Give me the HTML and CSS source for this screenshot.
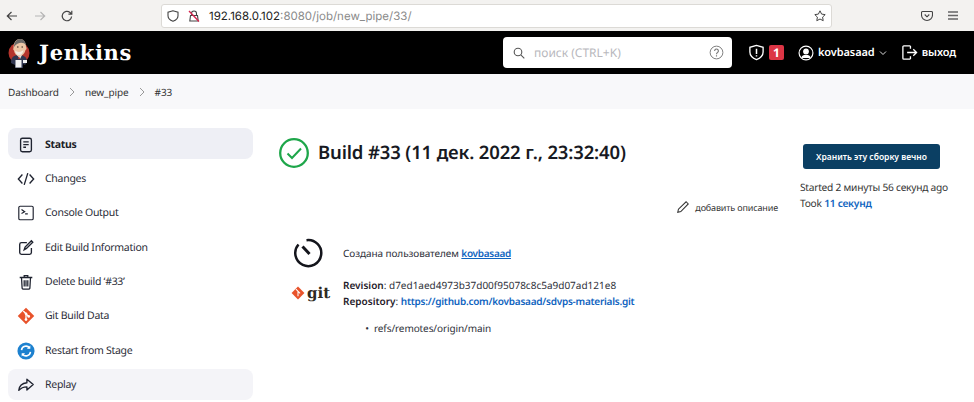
FILE: index.html
```html
<!DOCTYPE html>
<html lang="ru">
<head>
<meta charset="utf-8">
<title>Jenkins</title>
<link rel="stylesheet" href="styles.css">
</head>
<body>
<div class="chrome">
  <div class="nav-btns">
    <svg class="nav-ico" viewBox="0 0 12 12" fill="none" stroke="#444" stroke-width="1.200"><path d="M11 6H1.500M5.500 2 1.300 6l4.200 4"/></svg>
    <svg class="nav-ico" viewBox="0 0 12 12" fill="none" stroke="#b5b5b5" stroke-width="1.200"><path d="M1 6h9.500M6.500 2l4.200 4-4.200 4"/></svg>
    <svg class="nav-ico" viewBox="0 0 12 12" fill="none" stroke="#444" stroke-width="1.200"><path d="M10.600 6.500A4.700 4.700 0 1 1 9 2.500l1.600 1.500M10.800.8v3.400H7.400"/></svg>
  </div>
  <div class="urlbar">
    <svg class="url-ico" viewBox="0 0 12 12" fill="none" stroke="#444" stroke-width="1.100"><path d="M6 .8 1 2.200v3.500c0 2.900 2.400 4.600 5 5.500 2.600-.9 5-2.600 5-5.500V2.200z"/></svg>
    <svg class="url-ico" viewBox="0 0 12 12" fill="none"><path d="M3.500 5.500V3.500a2.500 2.500 0 0 1 5 0v2M1.800 11l.7-5.500h7l.7 5.500z" stroke="#444" stroke-width="1.100"/><path d="M1 1l10 10.500" stroke="#d7264f" stroke-width="1.300"/></svg>
    <div class="url"><span class="url-host">192.168.0.102</span>:8080/job/new_pipe/33/</div>
    <svg class="url-ico" viewBox="0 0 12 12" fill="none" stroke="#444" stroke-width="1"><path d="m6 .8 1.600 3.300 3.600.5-2.600 2.500.6 3.600L6 9l-3.200 1.700.6-3.600L.8 4.600l3.600-.5z"/></svg>
  </div>
  <div class="tools">
    <svg class="url-ico" viewBox="0 0 12 12" fill="none" stroke="#444" stroke-width="1.100"><path d="M1.500 1.500h9a1 1 0 0 1 1 1V5a5.500 5.500 0 0 1-11 0V2.500a1 1 0 0 1 1-1z"/><path d="M3.700 4.500 6 6.800l2.300-2.300"/></svg>
    <svg class="menu-ico" viewBox="0 0 10 9" fill="none" stroke="#666" stroke-width="1.300"><path d="M0 1h10M0 4.500h10M0 8h10"/></svg>
  </div>
</div>

<header class="topbar">
  <div class="brand">
    <svg class="logo" viewBox="0 0 22 30">
      <circle cx="11" cy="15" r="10.500" fill="#b5342c"/>
      <path d="M3 25c0-6 3-8 8-8s8 2 8 7l-2 3-2-1v4H7v-3z" fill="#30364f"/>
      <path d="M9 17l3 4 2-4z" fill="#e8e4de"/>
      <path d="M11 18l-1 3h2z" fill="#b5342c"/>
      <path d="M5.500 10C5.500 4 8.500 1 12 1s6 3 6 8c.8.5.8 2.500-.5 3-.5 3-3 6-6.500 6-2.500 0-4.500-2.500-5-5.500-.8-.3-1-1.500-.5-2.500z" fill="#ecc6a6"/>
      <path d="M6 9C6 4 9 1 12 1s5.500 2 5.800 6c-2-3-8-3.500-11.800 2z" fill="#6d6a68"/>
      <path d="M7 12.500c2 2 6 2 8.500-.5-.5 3-2 5-4.500 5s-3.500-2-4-4.500z" fill="#f4ece2"/>
      <path d="M9 9h1.500M13.500 9H15" stroke="#33261e" stroke-width="1"/>
      <rect x="7.500" y="22" width="6" height="7.500" fill="#f1f1f1"/>
      <rect x="15" y="22" width="4" height="3" fill="#f1f1f1"/>
    </svg>
    <span class="brand-name">Jenkins</span>
  </div>
  <div class="search">
    <svg class="ico12" viewBox="0 0 12 12" fill="none" stroke="#555" stroke-width="1.100"><circle cx="5" cy="5" r="3.800"/><path d="m7.800 7.800 3.500 3.500"/></svg>
    <span class="search-text">поиск (CTRL+K)</span>
    <svg class="help" viewBox="0 0 16 16" fill="none" stroke="#777" stroke-width="1"><circle cx="8" cy="8" r="6.800"/><path d="M6 6.300a2 2 0 1 1 3.200 1.600C8.400 8.500 8 8.900 8 9.800M8 11v1.200" stroke-width="1.200"/></svg>
  </div>
  <div class="top-actions">
    <div class="alert">
      <svg class="ico17" viewBox="0 0 18 18" fill="none" stroke="#fff" stroke-width="1.400"><path d="M9 1.500 2 3.500v5C2 12.500 5.500 15.200 9 16.500c3.500-1.300 7-4 7-8v-5z"/><path d="M9 5v5.500M9 11.800v1.400" stroke-width="1.600"/></svg>
      <span class="badge">1</span>
    </div>
    <div class="user">
      <svg class="ico16" viewBox="0 0 18 18" fill="none" stroke="#fff" stroke-width="1.300"><circle cx="9" cy="9" r="7.800"/><circle cx="9" cy="7.200" r="2.600" fill="#fff"/><path d="M4.300 14.500c1-3.800 8.400-3.800 9.400 0" fill="#fff"/></svg>
      <span>kovbasaad</span>
      <svg class="chev" viewBox="0 0 8 8" fill="none" stroke="#ddd" stroke-width="1"><path d="M1 2.500 4 5.500l3-3"/></svg>
    </div>
    <div class="logout">
      <svg class="ico17" viewBox="0 0 18 18" fill="none" stroke="#fff" stroke-width="1.400"><path d="M10 2H3a1 1 0 0 0-1 1v12a1 1 0 0 0 1 1h7M6.500 9h10M13 5.500 16.500 9 13 12.500M10 2v3M10 13v3"/></svg>
      <span>выход</span>
    </div>
  </div>
</header>

<nav class="crumbs">
  <span>Dashboard</span>
  <svg class="sep" viewBox="0 0 8 12" fill="none" stroke="#999" stroke-width="1"><path d="m2 2 4 4-4 4"/></svg>
  <span>new_pipe</span>
  <svg class="sep" viewBox="0 0 8 12" fill="none" stroke="#999" stroke-width="1"><path d="m2 2 4 4-4 4"/></svg>
  <span>#33</span>
</nav>

<div class="page">
  <aside class="side">
    <a class="item active">
      <svg class="side-ico" viewBox="0 0 20 20" fill="none" stroke="#1f2330" stroke-width="1.500"><rect x="4" y="2.500" width="12" height="15" rx="2"/><path d="M7 6.500h6M7 9.500h6M7 12.500h3"/></svg>
      <span>Status</span>
    </a>
    <a class="item">
      <svg class="side-ico" viewBox="0 0 20 20" fill="none" stroke="#1f2330" stroke-width="1.500"><path d="M6 5 1.500 10 6 15M14 5l4.500 5-4.500 5M12 3.500 8 16.500"/></svg>
      <span>Changes</span>
    </a>
    <a class="item">
      <svg class="side-ico" viewBox="0 0 20 20" fill="none" stroke="#1f2330" stroke-width="1.300"><rect x="2" y="2.500" width="16" height="15" rx="1.500"/><path d="m5 6 3.500 2.500L5 10.500M9 11h3"/></svg>
      <span>Console Output</span>
    </a>
    <a class="item">
      <svg class="side-ico" viewBox="0 0 20 20" fill="none" stroke="#1f2330" stroke-width="1.500"><path d="M11 4H5a2 2 0 0 0-2 2v9a2 2 0 0 0 2 2h9a2 2 0 0 0 2-2v-5M8 12l1-3 7-7 1.500 1.500-7 7z"/></svg>
      <span>Edit Build Information</span>
    </a>
    <a class="item">
      <svg class="side-ico" viewBox="0 0 20 20" fill="none" stroke="#1f2330" stroke-width="1.400"><path d="M3 5h14M8 5V3h4v2M5 5l.7 12a1.500 1.500 0 0 0 1.500 1h5.600a1.500 1.500 0 0 0 1.500-1L15 5M8 8v7M10 8v7M12 8v7"/></svg>
      <span>Delete build ‘#33’</span>
    </a>
    <a class="item">
      <svg class="side-ico" viewBox="0 0 20 20"><path d="M10 .800 19.200 10 10 19.200.800 10z" fill="#e8532b"/><path d="M7 4.500 13 10.500M10 7.500v7" stroke="#fff" stroke-width="1.400"/><circle cx="10" cy="7.500" r="1.500" fill="#fff"/><circle cx="10" cy="14" r="1.500" fill="#fff"/><circle cx="13" cy="10.500" r="1.500" fill="#fff"/></svg>
      <span>Git Build Data</span>
    </a>
    <a class="item">
      <svg class="side-ico" viewBox="0 0 20 20" fill="none"><circle cx="10" cy="10" r="9.500" fill="#1d81cf"/><path d="M5 9a5 5 0 0 1 9-2.300M15 11a5 5 0 0 1-9 2.300" stroke="#fff" stroke-width="1.700"/><path d="M14.800 3.800v3.800h-3.800zM5.200 16.200v-3.800H9z" fill="#fff"/></svg>
      <span>Restart from Stage</span>
    </a>
    <a class="item hover">
      <svg class="side-ico" viewBox="0 0 20 20" fill="none" stroke="#1f2330" stroke-width="1.500" stroke-linejoin="round"><path d="M11 3.500 18 9.500l-7 6v-3.500c-4 0-6.500 1-9 4 .5-5 3.500-8 9-8.500z"/></svg>
      <span>Replay</span>
    </a>
  </aside>

  <main class="main">
    <div class="head">
      <div class="head-left">
        <h1 class="title">
          <svg class="ok" viewBox="0 0 30 30" fill="none" stroke="#1ea64a"><circle cx="15" cy="15" r="13.800" stroke-width="2.300"/><path d="m8.500 15.500 4.500 4.500 9-9.500" stroke-width="2"/></svg>
          <span>Build #33 (11 дек. 2022 г., 23:32:40)</span>
        </h1>
        <div class="add-desc">
          <svg class="ico14" viewBox="0 0 16 16" fill="none" stroke="#333" stroke-width="1.200"><path d="M2 14l.8-3.500L11.500 2 14 4.500 5.500 13.200z"/></svg>
          <span>добавить описание</span>
        </div>
      </div>
      <div class="head-right">
        <button class="keep">Хранить эту сборку вечно</button>
        <div class="times">
          <div>Started 2 минуты 56 секунд ago</div>
          <div>Took <a class="link-b">11 секунд</a></div>
        </div>
      </div>
    </div>

    <div class="row row-user">
      <svg class="timer" viewBox="0 0 32 32" fill="none" stroke="#14151c" stroke-width="2.500"><path d="M13.500 3.200A13 13 0 1 1 5.500 7.500"/><path d="M9.500 9.500 16.500 17" stroke-width="3"/></svg>
      <div>Создана пользователем <a class="link-u">kovbasaad</a></div>
    </div>

    <div class="row row-git">
      <div class="git-logo">
        <svg class="git-mark" viewBox="0 0 20 20"><path d="M10 .800 19.200 10 10 19.200.800 10z" fill="#e8532b"/><path d="M7 4.500 13 10.500M10 7.500v7" stroke="#fff" stroke-width="1.500"/></svg>
        <span class="git-word">git</span>
      </div>
      <div class="git-info">
        <div><b>Revision</b>: d7ed1aed4973b37d00f95078c8c5a9d07ad121e8</div>
        <div><b>Repository</b>: <a class="link-b">https://github.com/kovbasaad/sdvps-materials.git</a></div>
      </div>
    </div>

    <ul class="refs"><li>refs/remotes/origin/main</li></ul>
  </main>
</div>
</body>
</html>
```

FILE: styles.css
```css
* { box-sizing: border-box; }
html, body { margin: 0; padding: 0; }
body {
  width: 974px;
  height: 402px;
  overflow: hidden;
  background: #fff;
  color: #23252f;
  font-family: "Noto Sans", "Liberation Sans", sans-serif;
  font-size: 11px;
  text-rendering: geometricPrecision;
}
svg { display: block; flex: none; }
.ico12 { width: 12px; height: 12px; }
.ico14 { width: 14px; height: 14px; }
.ico16 { width: 16px; height: 16px; }
.ico17 { width: 17px; height: 17px; }
.nav-ico { width: 12px; height: 12px; }
.url-ico { width: 12px; height: 12px; }
.menu-ico { width: 10px; height: 9px; }

.chrome {
  height: 31px;
  background: #f3f2f0;
  display: flex;
  align-items: center;
}
.nav-btns { width: 161px; padding-left: 6px; display: flex; gap: 15.500px; align-items: center; }
.urlbar {
  width: 671px;
  height: 24px;
  background: #fff;
  border: 1px solid #dcdad6;
  border-radius: 3px;
  display: flex;
  align-items: center;
  padding: 0 5px 0 5px;
  gap: 9px;
}
.url {
  flex: 1;
  font-size: 11.500px;
  color: #8a8a8a;
  font-family: "Inter", "Noto Sans", sans-serif;
}
.url-host { color: #222; }
.tools { flex: 1; display: flex; justify-content: flex-end; align-items: center; gap: 15px; padding-right: 16px; }

.topbar {
  height: 43px;
  background: #000;
  color: #fff;
  display: flex;
  align-items: center;
}
.brand { width: 503px; padding-left: 8px; display: flex; align-items: center; gap: 9px; }
.logo { width: 22px; height: 30px; }
.brand-name {
  font-family: "DejaVu Serif", "Liberation Serif", serif;
  font-weight: 700;
  font-size: 21px;
  letter-spacing: .7px;
}
.search {
  width: 229px;
  height: 31px;
  background: #fff;
  border-radius: 4px;
  display: flex;
  align-items: center;
  padding: 0 8px 0 10px;
}
.search-text { flex: 1; padding-left: 9px; color: #b8b8bd; font-size: 12px; }
.help { width: 15px; height: 15px; }
.top-actions { flex: 1; display: flex; align-items: center; font-weight: 600; font-size: 11px; padding-left: 16px; }
.alert { display: flex; align-items: center; gap: 4px; }
.badge {
  width: 15px;
  height: 15px;
  background: #dc3545;
  border-radius: 2px;
  text-align: center;
  line-height: 15px;
  font-size: 12px;
  font-weight: 700;
}
.user { display: flex; align-items: center; gap: 4px; margin-left: 14px; letter-spacing: -.1px; }
.chev { width: 8px; height: 8px; }
.logout { display: flex; align-items: center; gap: 4px; margin-left: 14px; font-size: 11px; letter-spacing: -.1px; }

.crumbs {
  height: 35px;
  background: #f8f8fa;
  display: flex;
  align-items: center;
  padding-left: 8px;
  font-size: 10px;
  letter-spacing: -.1px;
  color: #333;
}
.sep { width: 8px; height: 12px; margin: 0 9px; }

.page { display: flex; }
.side {
  flex: none;
  width: 279px;
  padding: 19px 0 0 8px;
  display: flex;
  flex-direction: column;
  gap: 3.400px;
}
.item {
  width: 245px;
  height: 31px;
  border-radius: 8px;
  display: flex;
  align-items: center;
  padding: 2px 0 0 9px;
  gap: 10px;
  font-size: 10.500px;
  letter-spacing: -.28px;
  color: #2b2d38;
}
.item.active { background: #eeeff5; font-weight: 700; color: #1c1e28; }
.item.hover { background: #f4f4f8; }
.side-ico { width: 18px; height: 18px; }

.main { flex: 1; min-width: 0; padding-top: 29px; }
.head { display: flex; }
.head-left { flex: none; width: 521px; }
.title {
  margin: 0;
  display: flex;
  align-items: center;
  gap: 9px;
  font-size: 18.500px;
  font-weight: 600;
  letter-spacing: -.15px;
  line-height: 30px;
  color: #171922;
}
.ok { width: 30px; height: 30px; }
.add-desc {
  display: flex;
  justify-content: flex-end;
  align-items: center;
  gap: 5px;
  margin-top: 32px;
  padding-right: 22px;
  font-size: 9px;
  letter-spacing: -.15px;
  color: #333;
}
.head-right { flex: 1; padding-top: 6px; white-space: nowrap; }
.keep {
  display: block;
  margin-left: 3px;
  width: 137px;
  height: 25px;
  border: 0;
  border-radius: 3px;
  background: #0b3f63;
  color: #fff;
  font-family: inherit;
  font-size: 8.500px;
  font-weight: 600;
  padding: 0;
}
.times { margin-top: 10px; font-size: 10.200px; letter-spacing: -.25px; line-height: 16px; color: #333; }
.link-b { color: #0f64c0; font-weight: 600; }
.link-u { color: #0f64c0; font-weight: 600; text-decoration: underline; letter-spacing: -.3px; }

.row { display: flex; align-items: center; font-size: 10px; color: #2e3039; }
.row-user { margin-top: 23px; padding-left: 14px; gap: 18px; letter-spacing: -.08px; }
.timer { width: 32px; height: 32px; }
.row-git { margin-top: 8px; padding-left: 12px; line-height: 16px; }
.git-logo { width: 52px; display: flex; align-items: center; gap: 2px; }
.git-mark { width: 14px; height: 14px; }
.git-word { font-family: "DejaVu Serif", serif; font-weight: 700; font-size: 15px; color: #2f2a1f; line-height: 14px; }
.git-info b { font-weight: 600; color: #1f2029; }
.git-info .link-b { letter-spacing: -.25px; }
.refs { margin: 11px 0 0; padding-left: 95px; font-size: 10px; letter-spacing: -.1px; line-height: 16px; color: #2e3039; }
.refs li::marker { content: "•\00a0\00a0"; }
```
